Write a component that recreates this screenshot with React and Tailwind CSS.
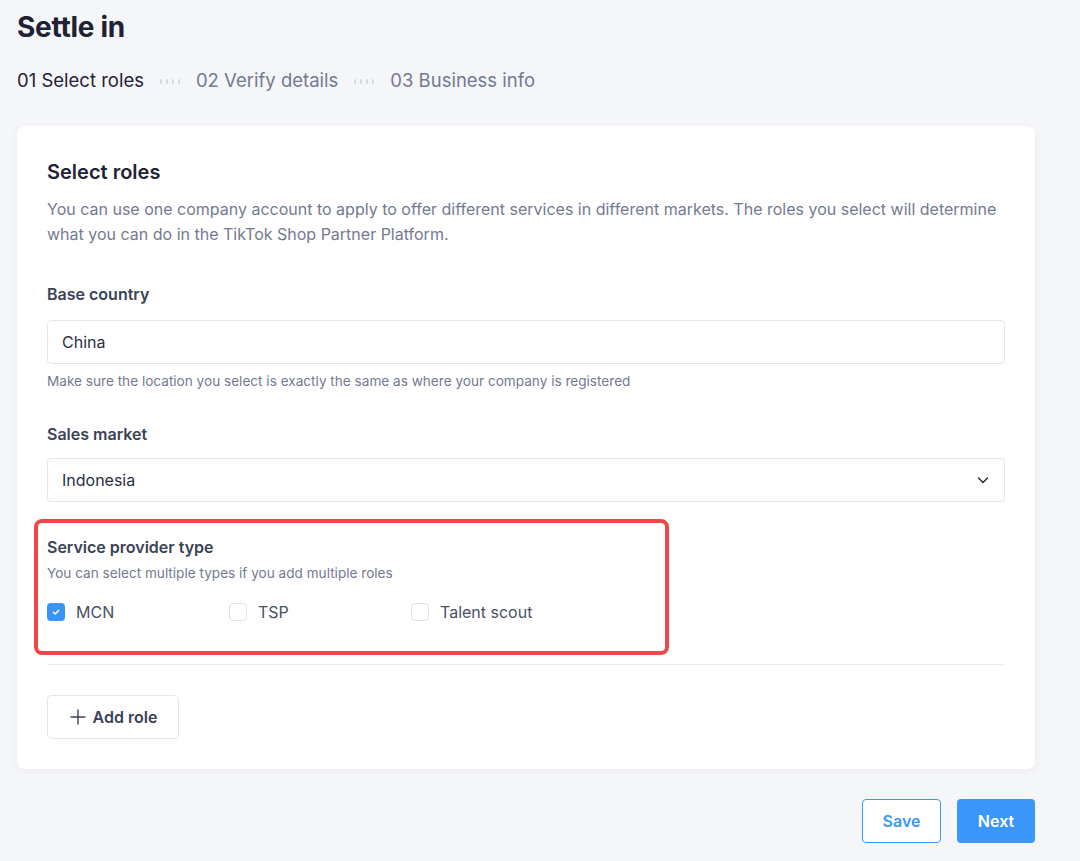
import React from "react";

const steps = [
  { n: "01", label: "Select roles", active: true },
  { n: "02", label: "Verify details" },
  { n: "03", label: "Business info" },
];

const Dots = () => (
  <div className="flex items-center gap-[4px] mx-[16px]">
    {[0, 1, 2, 3].map((i) => (
      <span key={i} className="w-[2px] h-[5px] rounded-full bg-[#d6dae4]" />
    ))}
  </div>
);

const Checkbox = ({ checked, label }) => (
  <label className="flex items-center gap-[11px] w-[182px]">
    {checked ? (
      <span className="w-[18px] h-[18px] rounded-[4px] bg-[#3a94f7] flex items-center justify-center">
        <svg width="10" height="10" viewBox="0 0 10 10" fill="none">
          <path d="M2.3 5.2 4.2 7 7.8 3.2" stroke="white" strokeWidth="1.5" strokeLinecap="round" strokeLinejoin="round" />
        </svg>
      </span>
    ) : (
      <span className="w-[18px] h-[18px] rounded-[4px] border border-[#dfe2ea] bg-white" />
    )}
    <span className="text-[16px] text-[#4a5063]">{label}</span>
  </label>
);

export default function App() {
  return (
    <div
      className="min-h-[861px] bg-[#f4f6fa] px-[17px] pt-[9px] text-[#23263a]"
      style={{ fontFamily: '"Inter", "Liberation Sans", sans-serif' }}
    >
      <h1 className="text-[28px] font-bold leading-[36px] text-[#1f2233] tracking-[-0.01em]">Settle in</h1>

      <div className="flex items-center mt-[21px] h-[30px] text-[18.5px]">
        {steps.map((s, i) => (
          <React.Fragment key={s.n}>
            {i > 0 && <Dots />}
            <span className={s.active ? "text-[#1f2233]" : "text-[#737a8f]"}>
              {s.n} {s.label}
            </span>
          </React.Fragment>
        ))}
      </div>

      <div className="mt-[30px] w-[1018px] bg-white rounded-[8px] shadow-[0_2px_8px_rgba(30,40,80,0.05)] px-[30px] pt-[33px] pb-[30px]">
        <h2 className="text-[20px] font-semibold leading-[26px] text-[#1f2233]">Select roles</h2>
        <p className="mt-[12px] text-[16px] leading-[25px] text-[#737a8f] pr-[6px]">
          You can use one company account to apply to offer different services in different markets. The roles you select will determine what you can do in the TikTok Shop Partner Platform.
        </p>

        <div className="mt-[36px] text-[16px] font-semibold text-[#3a4256] leading-[22px]">Base country</div>
        <div className="mt-[15px] h-[44px] border border-[#e3e6ef] rounded-[4px] flex items-center px-[14px] text-[16px] text-[#2b2f40]">
          China
        </div>
        <div className="mt-[8px] text-[13.6px] leading-[18px] text-[#737a8f]">
          Make sure the location you select is exactly the same as where your company is registered
        </div>

        <div className="mt-[33px] text-[16px] font-semibold text-[#3a4256] leading-[22px]">Sales market</div>
        <div className="mt-[13px] h-[44px] border border-[#e3e6ef] rounded-[4px] flex items-center justify-between px-[14px] text-[16px] text-[#2b2f40]">
          <span>Indonesia</span>
          <svg width="14" height="14" viewBox="0 0 14 14" fill="none">
            <path d="M2.5 5 7 9.5 11.5 5" stroke="#2b2f40" strokeWidth="1.5" strokeLinecap="round" strokeLinejoin="round" />
          </svg>
        </div>

        <div className="mt-[17px] -ml-[13px] w-[635px] h-[136px] border-4 border-[#f04848] rounded-[8px] pl-[9px] pt-[13px]">
          <div className="text-[16px] font-semibold text-[#3a4256] leading-[22px]">Service provider type</div>
          <div className="mt-[6px] text-[13.6px] leading-[18px] text-[#737a8f]">
            You can select multiple types if you add multiple roles
          </div>
          <div className="mt-[18px] flex items-center">
            <Checkbox checked label="MCN" />
            <Checkbox label="TSP" />
            <Checkbox label="Talent scout" />
          </div>
        </div>

        <div className="mt-[9px] border-t border-[#e8eaf0]" />

        <button className="mt-[30px] h-[44px] w-[132px] border border-[#e3e6ef] rounded-[4px] flex items-center justify-center gap-[6px] text-[16px] font-semibold text-[#3a4256]">
          <svg width="18" height="18" viewBox="0 0 18 18" fill="none">
            <path d="M9 1.5v15M1.5 9h15" stroke="#3a4256" strokeWidth="1.4" />
          </svg>
          Add role
        </button>
      </div>

      <div className="w-[1018px] flex justify-end gap-[16px] mt-[30px]">
        <button className="h-[44px] w-[79px] rounded-[4px] border border-[#3a97f9] bg-white text-[16px] font-semibold text-[#3a97f9]">
          Save
        </button>
        <button className="h-[44px] w-[78px] rounded-[4px] bg-[#3a97f9] text-[16px] font-semibold text-white">
          Next
        </button>
      </div>
    </div>
  );
}
